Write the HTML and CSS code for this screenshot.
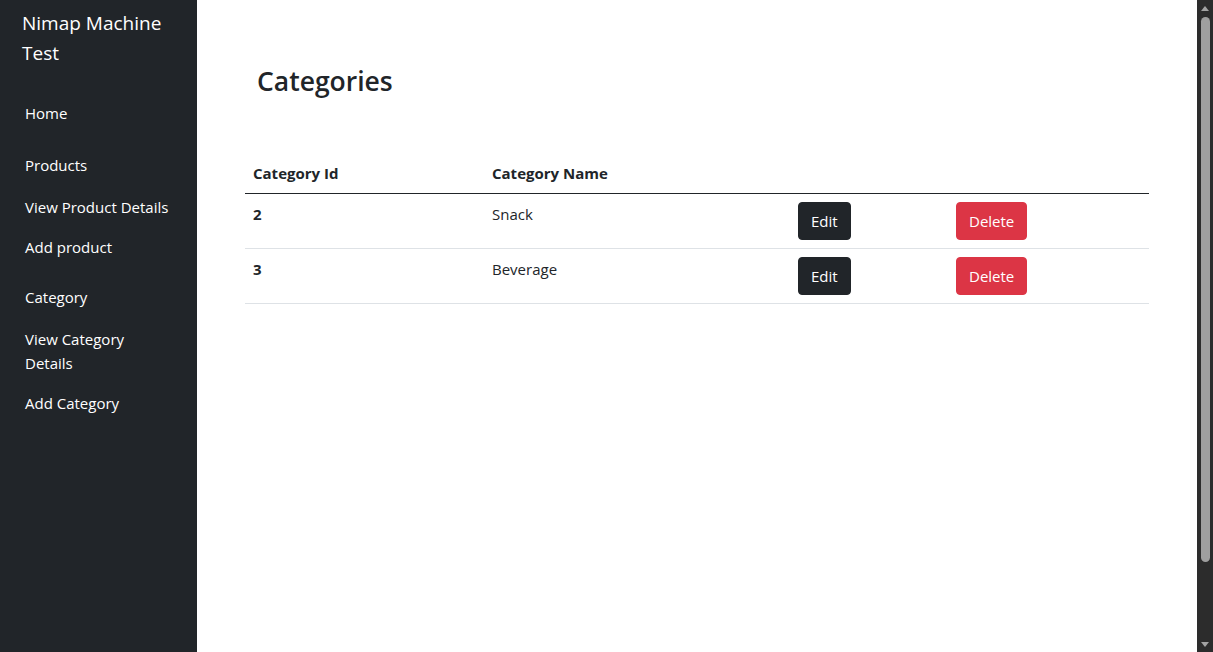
FILE: index.html
```html
<!DOCTYPE html>
<html lang="en">
<head>
<meta charset="utf-8">
<title>Categories</title>
<link rel="stylesheet" href="styles.css">
</head>
<body>
<div class="layout">
  <aside class="sidebar">
    <div class="brand">Nimap Machine Test</div>
    <nav class="nav">
      <a class="nav-link group" href="#">Home</a>
      <a class="nav-link group" href="#">Products</a>
      <a class="nav-link sub" href="#">View Product Details</a>
      <a class="nav-link" href="#">Add product</a>
      <a class="nav-link group cat" href="#">Category</a>
      <a class="nav-link sub" href="#">View Category Details</a>
      <a class="nav-link" href="#">Add Category</a>
    </nav>
  </aside>
  <main class="main">
    <h3 class="title">Categories</h3>
    <table class="table">
      <colgroup>
        <col class="c1"><col class="c2"><col class="c3"><col class="c4">
      </colgroup>
      <thead>
        <tr><th>Category Id</th><th>Category Name</th><th></th><th></th></tr>
      </thead>
      <tbody>
        <tr>
          <th>2</th><td>Snack</td>
          <td><button class="btn btn-dark">Edit</button></td>
          <td><button class="btn btn-danger">Delete</button></td>
        </tr>
        <tr>
          <th>3</th><td>Beverage</td>
          <td><button class="btn btn-dark">Edit</button></td>
          <td><button class="btn btn-danger">Delete</button></td>
        </tr>
      </tbody>
    </table>
  </main>
  <div class="scrollbar" aria-hidden="true">
    <div class="arrow arrow-up"></div>
    <div class="track"><div class="thumb"></div></div>
    <div class="arrow arrow-down"></div>
  </div>
</div>
</body>
</html>
```

FILE: styles.css
```css
body {
  margin: 0;
  background: #fff;
  color: #212529;
  font-family: "Open Sans", "Noto Sans", sans-serif;
  font-size: 15px;
  line-height: 24px;
}
.layout {
  display: grid;
  grid-template-columns: 197px 1fr 16px;
  height: 100vh;
  overflow: hidden;
}
.sidebar {
  background: #212529;
  color: #fff;
}
.brand {
  padding: 8px 22px 0 22px;
  font-size: 19px;
  line-height: 30px;
  width: 150px;
}
.nav {
  display: flex;
  flex-direction: column;
  margin-top: 25px;
}
.nav-link {
  color: #fff;
  text-decoration: none;
  padding: 8px 26px 8px 25px;
}
.nav-link.group + .nav-link.group { margin-top: 12px; }
.nav-link.cat { margin-top: 10px; }
.nav-link.sub { margin-top: 2px; }
.main {
  padding: 0 48px;
}
.title {
  margin: 63px 0 0 12px;
  font-size: 26.5px;
  line-height: 36px;
  font-weight: 600;
}
.table {
  margin-top: 54px;
  width: 904px;
  border-collapse: collapse;
}
.c1 { width: 239px; }
.c2 { width: 306px; }
.c3 { width: 158px; }
.c4 { width: 201px; }
.table th, .table td {
  text-align: left;
  vertical-align: top;
  padding: 8px;
  font-weight: 400;
}
.table th { font-weight: 700; }
.table thead th {
  border-bottom: 1px solid #212529;
}
.table tbody tr {
  border-bottom: 1px solid #dee2e6;
}
.btn {
  font-family: inherit;
  font-size: 15px;
  line-height: 24px;
  padding: 6px 12px;
  border: 1px solid transparent;
  border-radius: 4px;
  color: #fff;
  cursor: pointer;
}
.btn-dark { background: #212529; border-color: #212529; }
.btn-danger { background: #dc3545; border-color: #dc3545; }

.scrollbar {
  background: #2c2c2c;
  display: flex;
  flex-direction: column;
  align-items: center;
}
.arrow {
  height: 16px;
  width: 16px;
  display: flex;
  align-items: center;
  justify-content: center;
  flex: none;
}
.arrow::before {
  content: "";
  width: 0;
  height: 0;
  border-left: 4px solid transparent;
  border-right: 4px solid transparent;
}
.arrow-up::before { border-bottom: 5px solid #a3a3a3; }
.arrow-down::before { border-top: 5px solid #a3a3a3; }
.track {
  flex: 1;
  width: 16px;
  display: flex;
  justify-content: center;
}
.thumb {
  margin-top: 1px;
  width: 9px;
  height: 545px;
  background: #9f9f9f;
  border-radius: 5px;
}
```
